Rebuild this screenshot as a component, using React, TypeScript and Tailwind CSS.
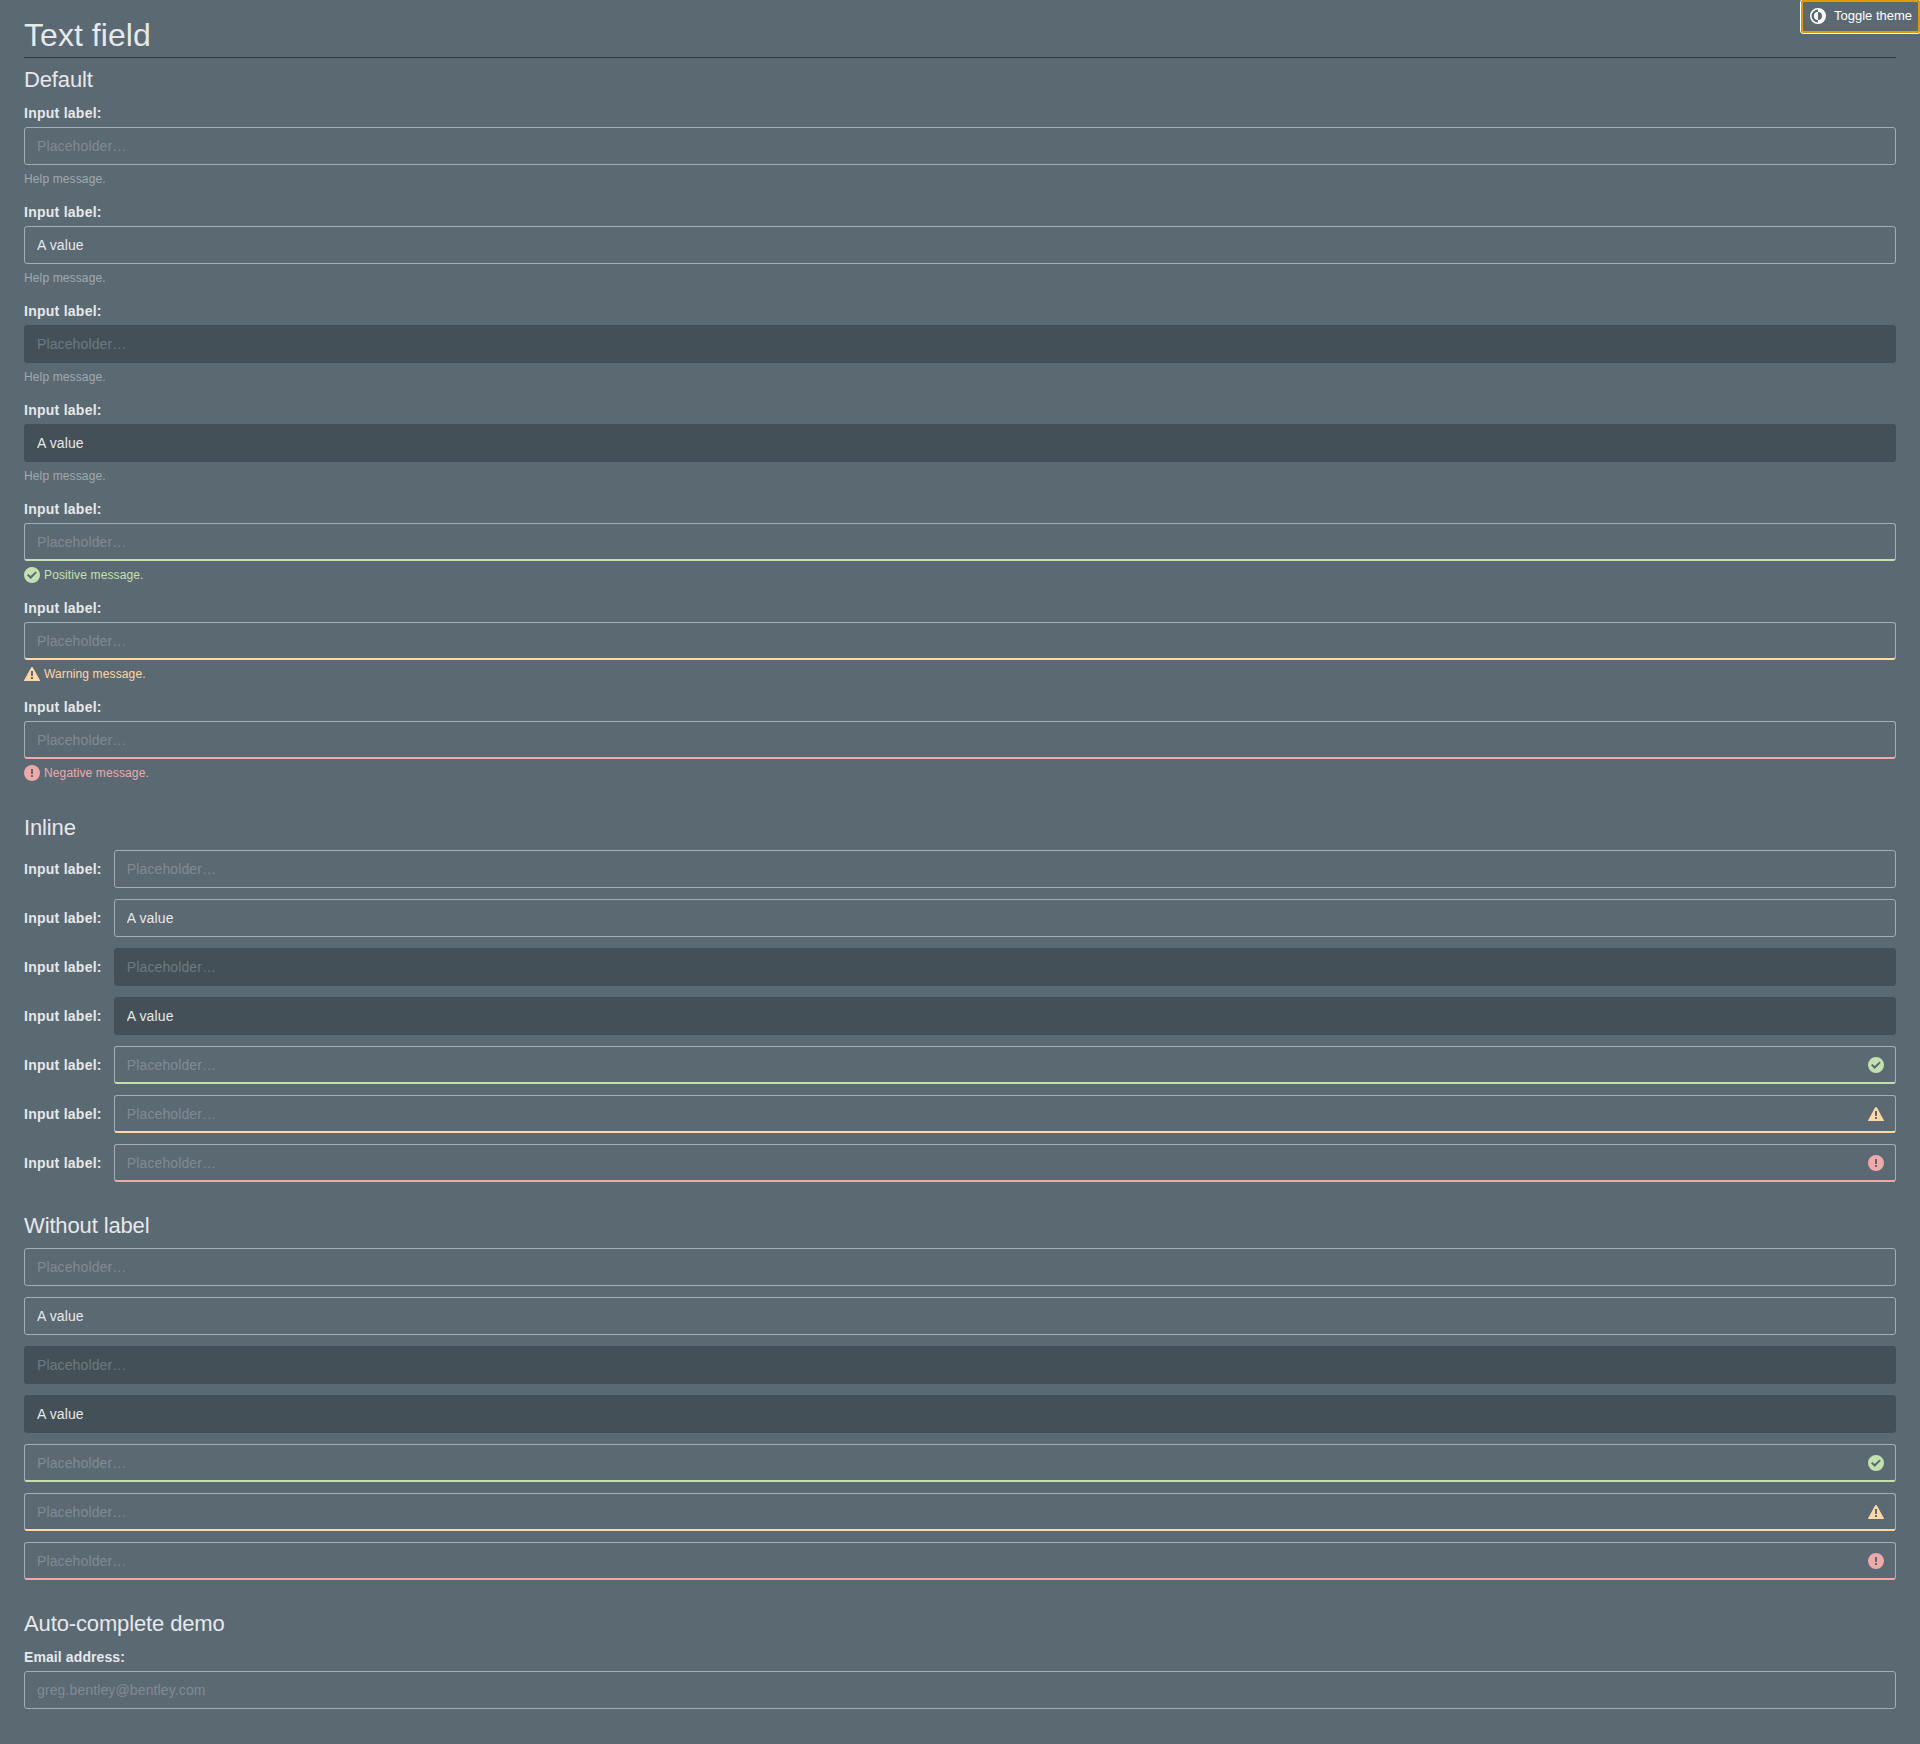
import React from "react";

type Status = "positive" | "warning" | "negative";

type Variant = {
  value?: string;
  disabled?: boolean;
  status?: Status;
  message: string;
};

const variants: Variant[] = [
  { message: "Help message." },
  { value: "A value", message: "Help message." },
  { disabled: true, message: "Help message." },
  { value: "A value", disabled: true, message: "Help message." },
  { status: "positive", message: "Positive message." },
  { status: "warning", message: "Warning message." },
  { status: "negative", message: "Negative message." },
];

const textColor: Record<Status, string> = {
  positive: "text-[#c3e1af]",
  warning: "text-[#fed7a5]",
  negative: "text-[#efa9a9]",
};

const borderColor: Record<Status, string> = {
  positive: "border-b-2 border-b-[#c3e1af]",
  warning: "border-b-2 border-b-[#fed7a5]",
  negative: "border-b-2 border-b-[#efa9a9]",
};

function StatusIcon({ status }: { status: Status }) {
  return (
    <svg viewBox="0 0 16 16" className={`size-4 shrink-0 fill-current ${textColor[status]}`}>
      {status === "positive" && (
        <path d="M8 0a8 8 0 1 0 8 8 8 8 0 0 0-8-8zM6.7 11.9 3 8.3 4.4 6.9l2.3 2.2 4.8-4.6 1.3 1.3z" />
      )}
      {status === "warning" && (
        <path d="M15.9 14.3 8.9 1.5a1 1 0 0 0-1.8 0L.1 14.3A.5.5 0 0 0 .6 15h14.8a.5.5 0 0 0 .5-.7zM9 13H7v-2h2zm0-3H7V5h2z" />
      )}
      {status === "negative" && (
        <path d="M8 0a8 8 0 1 0 8 8 8 8 0 0 0-8-8zm1 12H7v-2h2zm0-3H7V4h2z" />
      )}
    </svg>
  );
}

function Field({
  value,
  placeholder = "Placeholder…",
  disabled,
  status,
  icon,
}: {
  value?: string;
  placeholder?: string;
  disabled?: boolean;
  status?: Status;
  icon?: boolean;
}) {
  const surface = disabled
    ? "border-[#445057] bg-[#445057] placeholder:text-[#6e797f]"
    : "border-[#a5adb2] bg-transparent placeholder:text-[#808b91]";
  return (
    <div className="relative min-w-0 grow">
      <input
        type="text"
        defaultValue={value}
        placeholder={placeholder}
        disabled={disabled}
        className={`block h-[38px] w-full rounded-[3px] border px-3 text-sm tracking-[0.12px] text-[#e6e8ea] placeholder:opacity-100 ${surface} ${status ? borderColor[status] : ""}`}
      />
      {icon && status && (
        <span className="pointer-events-none absolute top-[11px] right-3">
          <StatusIcon status={status} />
        </span>
      )}
    </div>
  );
}

function Heading({ children }: { children: React.ReactNode }) {
  return <h2 className="text-[22px] leading-[30px] tracking-[-0.13px]">{children}</h2>;
}

function Label({ children, className = "tracking-[0.26px]" }: { children: React.ReactNode; className?: string }) {
  return <span className={`shrink-0 text-sm leading-[22px] font-bold ${className}`}>{children}</span>;
}

export default function App() {
  return (
    <div className="min-h-[1744px] bg-[#5b6973] px-6 font-['Liberation_Sans',Arial,sans-serif] text-[#e6e8ea]">
      <button className="absolute top-0 right-0 flex h-[33px] w-[119px] items-center gap-2 rounded-[3px] border-2 border-[#e69600] pb-px pl-[7px] text-[13px] whitespace-nowrap text-white shadow-[0_0_0_1px_#fff]">
        <svg viewBox="0 0 16 16" className="size-4 shrink-0 fill-current">
          <path d="M8 0a8 8 0 1 0 8 8 8 8 0 0 0-8-8zM8 14.5a6.5 6.5 0 0 1 0-13V4a4 4 0 0 1 0 8z" />
          <path d="M8 4a4 4 0 0 0 0 8z" />
        </svg>
        Toggle theme
      </button>

      <h1 className="h-[58px] border-b border-[#2f3a40] pt-[15px] text-[32px] leading-10 tracking-[0.05px]">
        Text field
      </h1>

      <section className="pt-[7px]">
        <Heading>Default</Heading>
        <div className="flex flex-col gap-3.5 pt-[7px]">
          {variants.map((v, i) => (
            <label key={i} className="flex h-[85px] flex-col">
              <span className="flex h-[25px] shrink-0 items-start">
                <Label>Input label:</Label>
              </span>
              <span className="flex shrink-0">
                <Field value={v.value} disabled={v.disabled} status={v.status} />
              </span>
              <span
                className={`flex shrink-0 items-center gap-1 pt-1.5 text-xs leading-4 tracking-[0.13px] ${v.status ? textColor[v.status] : "text-[#a0a9ae]"}`}
              >
                {v.status && <StatusIcon status={v.status} />}
                {v.message}
              </span>
            </label>
          ))}
        </div>
      </section>

      <section className="pt-8">
        <Heading>Inline</Heading>
        <div className="flex flex-col gap-[11px] pt-[7px]">
          {variants.map((v, i) => (
            <label key={i} className="flex items-center gap-3">
              <Label>Input label:</Label>
              <Field value={v.value} disabled={v.disabled} status={v.status} icon />
            </label>
          ))}
        </div>
      </section>

      <section className="pt-[29px]">
        <Heading>Without label</Heading>
        <div className="flex flex-col gap-[11px] pt-[7px]">
          {variants.map((v, i) => (
            <Field key={i} value={v.value} disabled={v.disabled} status={v.status} icon />
          ))}
        </div>
      </section>

      <section className="pt-[29px]">
        <Heading>Auto-complete demo</Heading>
        <label className="flex flex-col pt-[7px]">
          <span className="flex h-[25px] shrink-0 items-start">
            <Label className="tracking-[0.1px]">Email address:</Label>
          </span>
          <Field placeholder="greg.bentley@bentley.com" />
        </label>
      </section>
    </div>
  );
}
